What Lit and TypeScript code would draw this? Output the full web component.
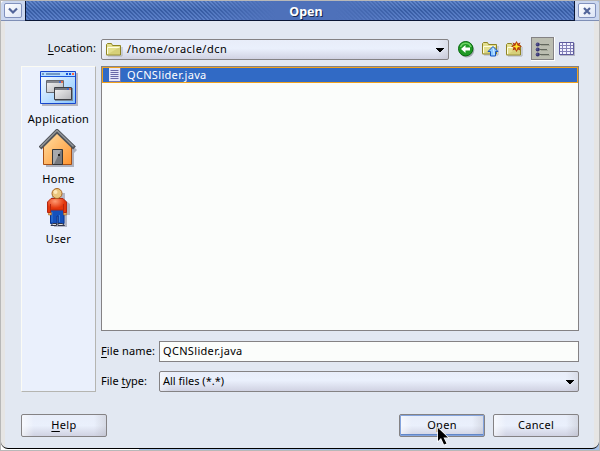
import { LitElement, html, css, svg } from "lit";
import { customElement } from "lit/decorators.js";

const folder = svg`<path d="M2 14h14V5" fill="none" stroke="#aeb2b8" stroke-width="1"/><path d="M.5 12.500V2.500l1-1h4l1 2h8v9.500h-14z" fill="#e3df8e" stroke="#8f8424"/><path d="M1.500 12V5.500h12.500" fill="none" stroke="#fffde0"/><path d="M2 12l12-7v7z" fill="#cdc76b" opacity=".6"/>`;

const icons = {
  folder: html`<svg width="17" height="16" viewBox="0 0 17 16">${folder}</svg>`,
  chevron: html`<svg width="10" height="8" viewBox="0 0 10 8"><path d="M1 1.500l4 4 4-4" fill="none" stroke="#52659a" stroke-width="2.200"/></svg>`,
  close: html`<svg width="8" height="8" viewBox="0 0 8 8"><path d="M1 1l6 6M7 1l-6 6" fill="none" stroke="#52659a" stroke-width="2.200"/></svg>`,
  arrow: html`<svg width="8" height="4" viewBox="0 0 8 4" shape-rendering="crispEdges"><path d="M0 0h8v1h-1v1h-1v1h-1v1h-2v-1h-1v-1h-1v-1h-1z" fill="#000"/></svg>`,
  doc: html`<svg width="14" height="14" viewBox="0 0 14 14"><path d="M1 0h12v14H1z" fill="#6f78b8"/><path d="M1 0h11v13H1z" fill="#e4e5f8"/><path d="M2.500 2.500h8M2.500 4.500h8M2.500 6.500h8M2.500 8.500h8M2.500 10.500h8" stroke="#6a68a8"/></svg>`,
  back: html`<svg width="17" height="17" viewBox="0 0 17 17"><circle cx="8.800" cy="9" r="7.500" fill="#a2a9b0"/><circle cx="7.700" cy="7.700" r="7.200" fill="#1f9a25" stroke="#08690f"/><path d="M2.500 6a5.500 5.500 0 0 1 10.500 0" fill="none" stroke="#6ed466" stroke-width="1.500"/><path d="M3 8l4.500-4v2.500H12v3H7.500V12z" fill="#fff"/></svg>`,
  up: html`<svg width="17" height="17" viewBox="0 0 17 17">${folder}<path d="M11 5.500l5 5h-2.500v4.500h-5v-4.500H6z" fill="#8cc8ff" stroke="#1856c0"/><path d="M11 7l1 4v3" stroke="#d8f0ff" fill="none"/></svg>`,
  fresh: html`<svg width="17" height="17" viewBox="0 0 17 17"><g transform="translate(0 1)">${folder}</g><path d="M10.500 0l1.500 2.500 2.500-1-1 2.500 2.500 1.500-2.500 1 1 3-2.500-1-1.500 2.500-1.500-2.500-2.500 1 1-3-2.500-1 2.500-1.500-1-2.500 2.500 1z" fill="#b43a0c"/><path d="M10.500 1.500l1 3 3 1-3 1-1 3-1-3-3-1 3-1z" fill="#ffe52d"/></svg>`,
  list: html`<svg width="16" height="15" viewBox="0 0 16 15"><g fill="#393775"><circle cx="2.700" cy="2.500" r="2"/><circle cx="2.700" cy="7.500" r="2"/><circle cx="2.700" cy="12.500" r="2"/></g><path d="M1.500 2h1M1.500 7h1M1.500 12h1" stroke="#9998c8"/><path d="M5 2.500h9M5 7.500h7M5 12.500h9" stroke="#63675e"/><path d="M6 3.500h9M6 8.500h7M6 13.500h9" stroke="#a2a598"/></svg>`,
  grid: html`<svg width="16" height="14" viewBox="0 0 16 14"><path d="M1 1h15v13H1z" fill="#b5b8c5"/><path d="M.5.5h14v12H.5z" fill="#f2f2ff" stroke="#5d5a9e"/><path d="M1 3.500h13M1 6.500h13M1 9.500h13M3.500 1v11M7.500 1v11M11.500 1v11" stroke="#8280b8"/></svg>`,
  application: html`<svg width="38" height="36" viewBox="0 0 38 36"><defs><linearGradient id="a" x2="1" y2="1"><stop stop-color="#fff"/><stop offset="1" stop-color="#84c4ff"/></linearGradient><linearGradient id="w" x2="1" y2="1"><stop stop-color="#f5f5f5"/><stop offset="1" stop-color="#b4b4b8"/></linearGradient></defs><path d="M2 2h36v33H2z" fill="#b4b5c0"/><path d="M.5.5h35v32H.5z" fill="url(#a)" stroke="#1746cd"/><path d="M1 1h34v4H1z" fill="#b5ddff"/><path d="M1 5.500h34" stroke="#1a58dc"/><path d="M2 3h2M6 3h14" stroke="#7399c4" stroke-width="2"/><path d="M26 3h2M29 3h2" stroke="#1653de" stroke-width="2"/><path d="M32 3h2" stroke="#ff653e" stroke-width="2"/><path d="M6.500 9.500h17v12h-17z" fill="url(#w)" stroke="#66686e"/><path d="M7 11h16" stroke="#85878e" stroke-width="2"/><path d="M15 17h18v13H15z" fill="#798b9f"/><path d="M14.500 16.500h17v12h-17z" fill="url(#w)" stroke="#3d3f44"/><path d="M15 18h16" stroke="#777980" stroke-width="2"/><path d="M19 11h2M27 18h2" stroke="#2b67e6" stroke-width="1.500"/><path d="M21 11h2M29 18h2" stroke="#ff653e" stroke-width="1.500"/></svg>`,
  home: html`<svg width="39" height="38" viewBox="0 0 39 38"><defs><linearGradient id="h" x2="1" y2="1"><stop stop-color="#ffe0a5"/><stop offset="1" stop-color="#ff9430"/></linearGradient></defs><path d="M20 3l18 18-3 3v14H7V24l-3-2z" fill="#acb0bd"/><path d="M4.500 17L18 4l14.500 13v18.500h-28z" fill="url(#h)" stroke="#a64f14"/><path d="M1 19L18 2l17.500 17" fill="none" stroke="#505358" stroke-width="4"/><path d="M1.500 18L18 1.500 34.500 17.500" fill="none" stroke="#92969a" stroke-width="1.500"/><path d="M13.500 20.500h10v15h-10z" fill="#77797e" stroke="#353638"/><path d="M14 21h8L15 35h-1z" fill="#a7a9ad"/><path d="M19 25h2v2h-2z" fill="#222"/></svg>`,
  user: html`<svg width="24" height="39" viewBox="0 0 24 39"><defs><radialGradient id="s" cx=".4" cy=".2"><stop stop-color="#ff9a72"/><stop offset="1" stop-color="#e3360b"/></radialGradient></defs><path d="M6 5h12v7l5 4v11h-3v12H7V27H3V15z" fill="#b3b6c4"/><path d="M3.500 21h13.500v14.500h-6V28H10v7.500H3.500z" fill="#1551bb" stroke="#06358f"/><path d="M5 24v10M12.500 27v7" stroke="#397fdc"/><path d="M1.500 24.500h3v2.500h-3zM16.500 24.500h3v2.500h-3z" fill="#e8ad58" stroke="#a75b1b" stroke-width=".5"/><path d="M.5 24.500V14l3.500-3.500h12l3.500 3.500v10.500h-3V22h-13v2.500z" fill="url(#s)" stroke="#b52710"/><path d="M3.500 16v6M16.500 16v6" stroke="#b52710"/><circle cx="10" cy="5.500" r="5" fill="#eac77f" stroke="#a86523"/><circle cx="8.500" cy="4" r="2" fill="#ffe9b9"/><path d="M4 37.500q1-3 5.500-2v2zM11 37.500v-2q5-1 6.500 2z" fill="#ddd" stroke="#303448"/></svg>`,
  cursor: html`<svg width="13" height="19" viewBox="0 0 13 19"><path d="M2 1v13l3-3 3 6.500 2.500-1-3-6H12z" fill="#000" stroke="#fff" stroke-width="1.500" paint-order="stroke"/></svg>`,
};

@customElement("app-root")
export class AppRoot extends LitElement {
  static styles = css`
    * { box-sizing: border-box; }
    :host { box-sizing: border-box; display: block; width: 600px; height: 451px; overflow: hidden; position: relative; background: linear-gradient(90deg, #fff 138px, #a5c0e8 138px); border: 1px solid #b8b8b8; font: 11px/14px "Noto Sans", sans-serif; color: #000; }
    svg { display: block; flex: none; }
    .window { height: 448px; border-bottom: 1px solid #000; border-radius: 4px 4px 7px 7px; background: linear-gradient(90deg, #e6e5e4 4px, #e2e8f2 4px 593px, #e6e5e4 593px); overflow: hidden; }
    .title { height: 20px; display: flex; background: #cbd7ef; border-bottom: 1px solid #7f8fb6; }
    .corner { width: 24px; flex: none; padding: 2px 3px; }
    .cap { width: 18px; height: 15px; display: flex; align-items: center; justify-content: center; background: linear-gradient(135deg, #fff, #dce4f5); border: 1px solid #8191bd; border-radius: 2px; }
    .bar { flex: 1; height: 20px; border: solid #0a1635; border-width: 0 1px 1px; display: flex; justify-content: center; padding-left: 12px; background: linear-gradient(#6a8ed080, #4369b080 50%, #5f82cc80), repeating-linear-gradient(45deg, #294d94 0 1.414px, #5c82ca 1.414px 2.828px); }
    .caption { width: 200px; text-align: center; background: linear-gradient(90deg, #4e71ba00, #4e71ba 35% 65%, #4e71ba00); color: #fff; font: bold 12.500px/21px "Noto Sans", sans-serif; text-shadow: 1px 1px #17284e; height: 19px; }
    .body { display: grid; grid-template-columns: 75px 478px; column-gap: 5px; padding: 16px 20px 0; grid-template-rows: 29px 326px 45px; }
    .loc { text-align: right; padding: 4px 0 0 0; }
    .top { display: flex; align-items: flex-start; }
    .field { display: flex; align-items: center; height: 21px; border: 1px solid #848284; padding: 0 4px 0 3px; background: #fbfdfb; }
    .combo { border-radius: 2px; background: linear-gradient(90deg, #ffffff80, #ffffff00 12px calc(100% - 12px), #b8b8c050), linear-gradient(#e8edf9, #eaf0fc 45%, #d0d2e2); }
    .combo .text { flex: 1; }
    .location { width: 348px; flex: none; margin-top: 2px; padding-left: 4px; }
    .location .text { margin: -2px 0 0 4px; }
    .tools { display: flex; margin: 4px 0 0 9px; flex: none; }
    .tools svg { margin-right: 7px; }
    .toggle { width: 24px; height: 24px; border: 1px solid #fff; border-width: 0 1px 1px 0; background: #bbbdb1; padding: 5px 4px; margin: -4px 4px 0 1px; box-shadow: inset 0 0 0 1px #848284; }
    .tools .grid { margin-top: 1px; }
    .side { width: 75px; height: 326px; border: 1px solid; border-color: #fbfbf4 #b5b5b1 #b5b5b1 #fbfbf4; background: #eaf0fc; display: flex; flex-direction: column; align-items: center; }
    .place { display: flex; flex-direction: column; align-items: center; height: 60px; justify-content: flex-end; padding-bottom: 1px; }
    .place .text { margin-top: 5px; }
    .main { display: grid; grid-template-rows: 265px 21px 21px; row-gap: 9.500px; }
    .files { border: 1px solid #848284; background: #fbfdfb; }
    .row { height: 16px; border: 1px solid #f0a21d; background: #316ac5; color: #fff; display: flex; align-items: center; padding-left: 5px; }
    .row .text { margin-left: 5px; }
    .line { display: grid; grid-template-columns: 58px 420px; align-items: center; }
    .actions { grid-column: 1 / 3; display: flex; padding-top: 22px; gap: 8px; }
    .button { width: 86px; height: 23px; border: 1px solid #848284; border-radius: 2px; display: flex; justify-content: center; align-items: center; padding-bottom: 1px; background: linear-gradient(90deg, #ffffffa0, #ffffff00 12px calc(100% - 12px), #a8a8b050), linear-gradient(#e8edf9, #eaf0fc 50%, #d0d2e2); }
    .help { margin-right: auto; }
    .default { box-shadow: inset 0 0 0 1px #84a4dd, inset 0 -2px #6287c8; }
    .text { white-space: nowrap; letter-spacing: .32px; }
    .path { letter-spacing: .48px; }
    .tight { letter-spacing: .12px; }
    .filter { letter-spacing: 0; margin-top: -2px; }
    .u { text-decoration: underline; text-underline-offset: 2px; }
    .cursor { position: absolute; left: 435px; top: 426px; }
  `;

  private place(icon: unknown, label: string) {
    return html`<div class="place">${icon}<span class="text">${label}</span></div>`;
  }

  render() {
    return html`
      <div class="window">
        <div class="title">
          <div class="corner"><div class="cap">${icons.chevron}</div></div>
          <div class="bar"><div class="caption">Open</div></div>
          <div class="corner"><div class="cap">${icons.close}</div></div>
        </div>
        <div class="body">
          <div class="loc text tight"><span class="u">L</span>ocation:</div>
          <div class="top">
            <div class="field combo location">${icons.folder}<span class="text path">/home/oracle/dcn</span>${icons.arrow}</div>
            <div class="tools">${icons.back}${icons.up}${icons.fresh}<div class="toggle">${icons.list}</div><div class="grid">${icons.grid}</div></div>
          </div>
          <div class="side">
            ${this.place(icons.application, "Application")}
            ${this.place(icons.home, "Home")}
            ${this.place(icons.user, "User")}
          </div>
          <div class="main">
            <div class="files"><div class="row">${icons.doc}<span class="text">QCNSlider.java</span></div></div>
            <div class="line"><span class="text tight"><span class="u">F</span>ile name:</span><div class="field"><span class="text">QCNSlider.java</span></div></div>
            <div class="line"><span class="text filter">File <span class="u">t</span>ype:</span><div class="field combo"><span class="text filter">All files (*.*)</span>${icons.arrow}</div></div>
          </div>
          <div class="actions">
            <div class="button help"><span class="text"><span class="u">H</span>elp</span></div>
            <div class="button default"><span class="text">Open</span></div>
            <div class="button"><span class="text">Cancel</span></div>
          </div>
        </div>
      </div>
      <div class="cursor">${icons.cursor}</div>
    `;
  }
}
